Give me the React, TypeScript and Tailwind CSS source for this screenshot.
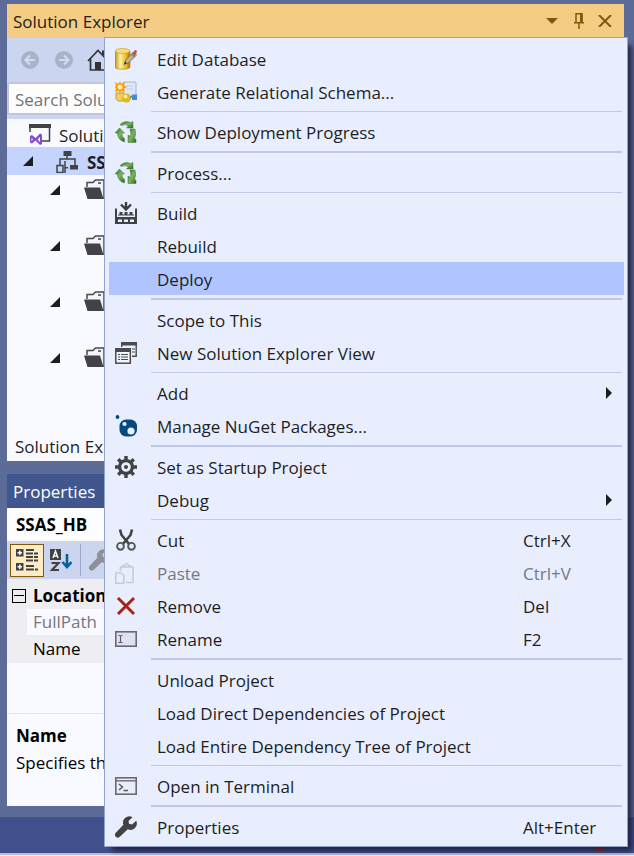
import React from "react";

type IconProps = { children: React.ReactNode; size?: string };

function Svg({ children, size = "size-[22px]" }: IconProps) {
  return (
    <svg viewBox="0 0 22 22" className={`${size} shrink-0`} fill="none" aria-hidden="true">
      {children}
    </svg>
  );
}

function EditDatabaseIcon() {
  return (
    <Svg>
      <defs>
        <linearGradient id="gold" x1="0" x2="1" y1="0" y2="0">
          <stop offset="0" stopColor="#c8910f" />
          <stop offset="0.35" stopColor="#fdf0a0" />
          <stop offset="0.75" stopColor="#e9b825" />
          <stop offset="1" stopColor="#a8730a" />
        </linearGradient>
      </defs>
      <path d="M0 3v16c0 3 15 3 15 0V3z" fill="url(#gold)" stroke="#a9791c" strokeWidth="0.6" />
      <ellipse cx="7.5" cy="3" rx="7.5" ry="2.6" fill="#f8dc6c" stroke="#c9992c" strokeWidth="0.6" />
      <path d="M9 16.500l2-5 7.500-7.500 3 3-7.500 7.500z" fill="#c3b287" stroke="#77653e" strokeWidth="0.8" />
      <path d="M9 16.500l1-3 2 2z" fill="#333" />
      <path d="M17 5.500l3-3.500q2-.5 2 2l-2.500 4z" fill="#bf5543" />
      <path d="M16 6l3.500 3" stroke="#7d8792" strokeWidth="1.500" />
    </Svg>
  );
}

function SchemaIcon() {
  return (
    <Svg>
      <rect x="8" y="1" width="13" height="14" rx="1" fill="#dce7f8" stroke="#a7b4d2" />
      <path d="M11 5h7M11 8h7" stroke="#c3cfe9" />
      <path d="M5 0l1.500 3L10 1 9 4.500 12 6 9 7.500 10 11 6.500 9.500 5 12 3.500 9.500 0 11 1 7.500 0 6 1 4 0 1l3.500 2z" fill="#f59b13" />
      <circle cx="5" cy="6" r="2.500" fill="#fff08a" />
      <path d="M1 12h8v8H3l-2-2z" fill="#f0cf5b" stroke="#c89d26" />
      <circle cx="11.500" cy="17" r="4.500" fill="#dfba20" />
      <circle cx="10.500" cy="15.500" r="2" fill="#fbf09c" />
      <path d="M15 16h3" stroke="#4c82c4" strokeWidth="1.500" />
      <rect x="17" y="13.500" width="5" height="5.500" fill="#4c86d4" />
    </Svg>
  );
}

function ProcessIcon() {
  return (
    <Svg>
      <defs>
        <linearGradient id="leaf" x1="0" x2="1" y1="0" y2="1">
          <stop offset="0" stopColor="#2f6a2a" />
          <stop offset="0.5" stopColor="#79b85c" />
          <stop offset="1" stopColor="#2c6427" />
        </linearGradient>
      </defs>
      <g fill="url(#leaf)" stroke="#3c7436" strokeWidth="0.5">
        <path d="M5 3.500Q10-1 15.500 1.500L18 .5v6.500h-6.500l2-2Q10 2.500 6.500 4.500z" />
        <path d="M0 12l4.500-5 5 5H7q-.5 4 2.500 5.500V21Q2.500 19 2.500 12z" />
        <path d="M15.500 8h4.500q1.500 5-.5 9l1.500 1.500V21.500h-8V14l2.500 1.500q1-3-.5-7.500z" />
      </g>
    </Svg>
  );
}

function BuildIcon() {
  return (
    <Svg>
      <path d="M11 0v7M6 2.500l5 5 5-5" stroke="#3d3d40" strokeWidth="2.400" />
      <path d="M0 6.500h2v6h18v-6h2V22H0z" fill="#424245" />
      <path d="M2 6.500h1v7h16v-7h1v8.500H2z" fill="#e8eefe" />
      <path d="M4.500 10h3v3h-3zm5 0h3v3h-3zm5 0h3v3h-3z" fill="#424245" />
      <path d="M3 17.500h4v2.500H3zm6 0h4v2.500H9zm6 0h4v2.500h-4z" fill="#e8eefe" />
    </Svg>
  );
}

function NewViewIcon() {
  return (
    <Svg>
      <path d="M6.700 5V.8h14.500v13.500H17" stroke="#4b4b4e" strokeWidth="1.400" />
      <path d="M6 0h16v3.500H6z" fill="#4b4b4e" />
      <rect x="0.800" y="6.800" width="14.500" height="14.400" fill="#f3f5ff" stroke="#4b4b4e" strokeWidth="1.500" />
      <path d="M0 6h16v4H0z" fill="#4b4b4e" />
      <path d="M3 12.500h2m1 0h7M3 15h2m1 0h7M3 17.500h2m1 0h7M17 7h3m-3 3h3" stroke="#4b4b4e" strokeWidth="1.200" />
    </Svg>
  );
}

function NuGetIcon() {
  return (
    <Svg>
      <circle cx="2.500" cy="2" r="1.900" fill="#04497d" />
      <rect x="4.500" y="4.500" width="17.500" height="17" rx="6.500" fill="#04497d" />
      <circle cx="9.500" cy="9" r="2.100" fill="#e8eefe" />
      <circle cx="16" cy="16" r="3.600" fill="#e8eefe" />
    </Svg>
  );
}

function GearIcon() {
  return (
    <Svg>
      <circle cx="11" cy="11" r="6.400" stroke="#424245" strokeWidth="3.200" />
      <path
        d="M11 0v4M11 18v4M0 11h4M18 11h4M3.200 3.200l3 3M15.800 15.800l3 3M18.800 3.200l-3 3M6.200 15.800l-3 3"
        stroke="#424245"
        strokeWidth="3.400"
      />
      <circle cx="11" cy="11" r="2" fill="#424245" />
    </Svg>
  );
}

function CutIcon() {
  return (
    <Svg>
      <path d="M5 .5l1.500 5.500 8 9.500M17 .5l-1.500 5.500-8 9.500" stroke="#424245" strokeWidth="2.600" />
      <circle cx="5.500" cy="17.300" r="3.400" stroke="#55555a" strokeWidth="1.900" />
      <circle cx="16.500" cy="17.300" r="3.400" stroke="#55555a" strokeWidth="1.900" />
    </Svg>
  );
}

function PasteIcon() {
  return (
    <Svg>
      <g stroke="#c7cad8" strokeWidth="1.600">
        <path d="M5.500 9V5H18v15.500h-7" />
        <path d="M8 5V3.500h1.500Q11-.5 13.500 3.500H15V5" />
        <path d="M.8 11h5.500l2.500 2.500v7.700h-8z" />
      </g>
    </Svg>
  );
}

function RemoveIcon() {
  return (
    <Svg>
      <path d="M3 3l16 16M19 3L3 19" stroke="#a62511" strokeWidth="3" />
    </Svg>
  );
}

function RenameIcon() {
  return (
    <Svg>
      <rect x="0.800" y="3.800" width="20.400" height="14.400" fill="#dfe0f3" stroke="#6a6a6e" strokeWidth="1.600" />
      <path d="M3.500 7.500h1q1 0 1 1v5q0 1-1 1h-1M7.500 7.500h-1q-1 0-1 1v5q0 1 1 1h1" stroke="#5a5a5e" strokeWidth="1.100" />
    </Svg>
  );
}

function TerminalIcon() {
  return (
    <Svg>
      <rect x="0.800" y="2.800" width="20.400" height="16.400" fill="#ebecf9" stroke="#6a6a6e" strokeWidth="1.600" />
      <path d="M1 5.800h20" stroke="#6a6a6e" strokeWidth="1.400" />
      <path d="M4 9l3.500 3L4 15M8.500 15.500H13" stroke="#58585c" strokeWidth="1.500" />
    </Svg>
  );
}

function WrenchIcon({ color = "#424245" }: { color?: string }) {
  return (
    <Svg>
      <path
        d="M17.500 1.200A6.300 6.300 0 0 0 8.400 8.800L.8 16.800a2.800 2.800 0 0 0 4 4l8-7.600A6.300 6.300 0 0 0 21.200 4.800L17 8.500l-3-.8L13.500 5z"
        fill={color}
      />
    </Svg>
  );
}

type Item = {
  label: string;
  icon?: React.ReactNode;
  keys?: string;
  submenu?: boolean;
  disabled?: boolean;
  active?: boolean;
};

const groups: Item[][] = [
  [
    { label: "Edit Database", icon: <EditDatabaseIcon /> },
    { label: "Generate Relational Schema...", icon: <SchemaIcon /> },
  ],
  [{ label: "Show Deployment Progress", icon: <ProcessIcon /> }],
  [{ label: "Process...", icon: <ProcessIcon /> }],
  [
    { label: "Build", icon: <BuildIcon /> },
    { label: "Rebuild" },
    { label: "Deploy", active: true },
  ],
  [
    { label: "Scope to This" },
    { label: "New Solution Explorer View", icon: <NewViewIcon /> },
  ],
  [
    { label: "Add", submenu: true },
    { label: "Manage NuGet Packages...", icon: <NuGetIcon /> },
  ],
  [
    { label: "Set as Startup Project", icon: <GearIcon /> },
    { label: "Debug", submenu: true },
  ],
  [
    { label: "Cut", icon: <CutIcon />, keys: "Ctrl+X" },
    { label: "Paste", icon: <PasteIcon />, keys: "Ctrl+V", disabled: true },
    { label: "Remove", icon: <RemoveIcon />, keys: "Del" },
    { label: "Rename", icon: <RenameIcon />, keys: "F2" },
  ],
  [
    { label: "Unload Project" },
    { label: "Load Direct Dependencies of Project" },
    { label: "Load Entire Dependency Tree of Project" },
  ],
  [{ label: "Open in Terminal", icon: <TerminalIcon /> }],
  [{ label: "Properties", icon: <WrenchIcon />, keys: "Alt+Enter" }],
];

function MenuRow({ item }: { item: Item }) {
  return (
    <button
      type="button"
      role="menuitem"
      disabled={item.disabled}
      className={`flex h-[33px] w-full items-center pl-[6px] text-left ${
        item.active ? "bg-[#b0c5ff]" : ""
      } ${item.disabled ? "text-[#76787f]" : ""}`}
    >
      <span className="mr-5 w-[22px] shrink-0">{item.icon}</span>
      <span className="flex-1 pt-[2px] whitespace-nowrap">{item.label}</span>
      {item.keys && <span className="w-[101px] pt-[2px] whitespace-nowrap">{item.keys}</span>}
      {item.submenu && (
        <svg viewBox="0 0 6 12" className="mr-3 h-3 w-[6px]" aria-hidden="true">
          <path d="M0 0l6 6-6 6z" fill="#1e1e1e" />
        </svg>
      )}
    </button>
  );
}

function ContextMenu() {
  return (
    <div
      role="menu"
      className="absolute top-[37px] right-[6px] left-[104px] border border-[#93a3cb] bg-[#e8eefe] pt-1 pr-[3px] pb-[3px] pl-1 shadow-[6px_6px_5px_-2px_rgba(20,25,50,0.8)]"
    >
      {groups.map((group, i) => (
        <div key={group[0].label}>
          {i > 0 && (
            <div
              role="separator"
              className={`my-[3px] mr-[2px] ml-[42px] border-[#bec9e9] ${i % 2 ? "border-t" : "border-t-2"}`}
            />
          )}
          {group.map((item) => (
            <MenuRow key={item.label} item={item} />
          ))}
        </div>
      ))}
    </div>
  );
}

function Expander() {
  return (
    <svg viewBox="0 0 10 10" className="size-[10px] shrink-0" aria-hidden="true">
      <path d="M10 0v10H0z" fill="#1e1e1e" />
    </svg>
  );
}

function FolderIcon() {
  return (
    <Svg>
      <path d="M3 8V3.500h6L11.500 1H20v18H18" stroke="#4a4a4d" strokeWidth="1.500" fill="#f3f4fb" />
      <path d="M0 8.500h16l3.500 11.500H3.500z" fill="#424245" />
      <path d="M14 4h3" stroke="#424245" strokeWidth="1.500" />
    </Svg>
  );
}

function NavIcon({ back }: { back?: boolean }) {
  return (
    <svg viewBox="0 0 18 18" className="size-[18px]" fill="none" aria-hidden="true">
      <circle cx="9" cy="9" r="9" fill="#abb2c8" />
      <path
        d={back ? "M14 9H5M9 4.500L4.500 9 9 13.500" : "M4 9h9M9 4.500l4.500 4.500L9 13.500"}
        stroke="#d2daf2"
        strokeWidth="2.200"
      />
    </svg>
  );
}

function SolutionExplorer() {
  const folders = ["Data Sources", "Data Source Views", "Cubes", "Dimensions"];
  return (
    <section className="mr-[10px] ml-[7px] bg-[#f9faff]">
      <header className="flex h-[34px] items-center bg-[#f5cc84] px-[6px] text-[#1e1e1e]">
        <h2 className="flex-1 pt-[2px]">Solution Explorer</h2>
        <button type="button" aria-label="Window position" className="mr-4">
          <svg viewBox="0 0 12 6" className="h-[6px] w-3">
            <path d="M0 0h12L6 6z" fill="#80590d" />
          </svg>
        </button>
        <button type="button" aria-label="Auto hide" className="mr-[14px]">
          <svg viewBox="0 0 10 16" className="h-4 w-[10px]" fill="none">
            <path d="M2 9V.8h6V9M0 9.800h10M5 10v6" stroke="#80590d" strokeWidth="1.500" />
            <path d="M6 1h2.500v8H6z" fill="#80590d" />
          </svg>
        </button>
        <button type="button" aria-label="Close" className="mr-[6px]">
          <svg viewBox="0 0 14 12" className="h-3 w-[14px]" fill="none">
            <path d="M1 0l12 12M13 0L1 12" stroke="#80590d" strokeWidth="2" />
          </svg>
        </button>
      </header>

      <div className="flex h-[44px] items-center bg-[#ccd5f0] pl-[14px]">
        <button type="button" aria-label="Back" className="mr-4">
          <NavIcon back />
        </button>
        <button type="button" aria-label="Forward" className="mr-[14px]">
          <NavIcon />
        </button>
        <button type="button" aria-label="Home">
          <svg viewBox="0 0 22 22" className="size-[22px]" fill="none">
            <path d="M1 12L11 1.500 21 12M3.500 10v11h15V10" stroke="#333336" strokeWidth="1.700" />
            <path d="M16 6V1.500" stroke="#333336" strokeWidth="2" />
            <path d="M8 13h6v8H8z" fill="#333336" />
          </svg>
        </button>
      </div>
      <div className="border-b-4 border-[#ccd5f0]">
        <input
          aria-label="Search Solution Explorer"
          placeholder="Search Solution Explorer"
          className="block h-[33px] w-full border-2 border-[#c0c7dc] bg-[#fdfdfe] px-[6px] pt-[2px] placeholder:text-[#717377]"
        />
      </div>

      <div role="tree" aria-label="Solution" className="h-[314px]">
        <div role="treeitem" className="flex h-7 items-center pt-1 pl-[22px]">
          <Svg>
            <path d="M1 8V1h19.500v16H13" stroke="#424245" strokeWidth="1.500" />
            <path d="M0 0h22v4H0z" fill="#424245" />
            <path d="M1 12l2-1 3.500 3L11 9.500l2 1V20l-2 1-4.500-4.500-3.500 3-2-1z" fill="#8a4fc8" />
            <path d="M2.500 14v3l1.500-1.500zM11 13l-2.500 2.500L11 18z" fill="#f9faff" />
          </Svg>
          <span className="ml-2 pt-[2px]">Solution</span>
        </div>
        <div role="treeitem" aria-selected="true" className="flex h-7 items-center bg-[#c5d4fe] pl-4">
          <Expander />
          <span className="ml-[23px] pt-[2px]">
            <Svg>
              <path d="M11 3v5M11 8H4v6M11 8h8v6M9 10v12" stroke="#424245" strokeWidth="1.500" />
              <path d="M7.500 0h8v5h-8zM14 14h8v4.500h-8z" fill="#424245" />
              <path d="M1 14.500h6v7H1z" stroke="#424245" strokeWidth="1.500" fill="#c5d4fe" />
              <path d="M9 16h3v1.500H9z" fill="#424245" />
            </Svg>
          </span>
          <span className="ml-[9px] pt-[4px] font-bold">SSAS_HB</span>
        </div>
        {folders.map((name) => (
          <div key={name} role="treeitem" aria-label={name} className="flex h-14 items-start pt-1 pl-[43px]">
            <span className="mt-[6px] flex">
              <Expander />
            </span>
            <span className="ml-6 flex">
              <FolderIcon />
            </span>
          </div>
        ))}
      </div>
      <footer className="flex h-7 items-center pl-2">Solution Explorer</footer>
    </section>
  );
}

function PropertiesPanel() {
  return (
    <section className="mt-[13px] mr-[10px] ml-[7px] bg-[#f9faff] text-black">
      <header className="flex h-[34px] items-center bg-[#40568d] px-[6px] text-white">
        <h2 className="pt-[2px]">Properties</h2>
      </header>
      <div className="flex h-[33px] items-center bg-[#fdfdff] pl-[9px] font-bold">SSAS_HB</div>
      <div className="flex h-[38px] items-center bg-[#ccd5f0] pl-[3px]">
        <button
          type="button"
          aria-label="Categorized"
          className="flex h-[33px] w-[34px] items-center justify-center border border-[#80590d] bg-[#fdecc3]"
        >
          <Svg>
            <path d="M0 0h7.500v7.500H0zM0 14h7.500v7.500H0z" fill="#424245" />
            <path d="M3.800 1.500v4.500M1.500 3.800H6M3.800 15.500V20M1.500 17.800H6" stroke="#fff" strokeWidth="1.500" />
            <path d="M10 1h8M10 4.500h7m1 0h4M10 8h7m1 0h4M10 11.500h7m1 0h4M10 17h8M10 20.500h8m1 0h3" stroke="#424245" strokeWidth="2.200" />
          </Svg>
        </button>
        <button type="button" aria-label="Alphabetical" className="ml-[6px]">
          <svg viewBox="0 0 22 22" className="size-[22px]" fill="none">
            <path d="M0 0h11v11H0z" fill="#424245" />
            <path d="M3 9l2.500-7L8 9M3.500 7h4" stroke="#fff" strokeWidth="1.400" />
            <path d="M1.500 14h7l-6.500 7h7" stroke="#424245" strokeWidth="2.200" />
            <path d="M17 5v13M12.500 13l4.500 5 4.500-5" stroke="#04619e" strokeWidth="2.600" />
          </svg>
        </button>
        <span className="mx-2 h-8 w-px bg-[#9ba7cb]" />
        <button type="button" aria-label="Property pages">
          <WrenchIcon color="#8e9097" />
        </button>
      </div>
      <div className="bg-[#eeedf2] pt-[3px]">
        <div className="flex h-[27px] items-center pl-[5px]">
          <span className="flex size-[14px] items-center border border-black px-px">
            <span className="h-px w-full bg-black" />
          </span>
          <span className="ml-[7px] font-bold">Location</span>
        </div>
        <div className="ml-[20px] flex h-[26px] items-center bg-[#f9faff] pl-[6px] text-[#76777c]">
          FullPath
        </div>
        <div className="flex h-7 items-center pl-[26px]">Name</div>
      </div>
      <div className="h-[50px]" />
      <div className="h-[93px] border-t border-[#e6e7ee] pt-2 pl-[9px]">
        <div className="flex h-[27px] items-center font-bold">Name</div>
        <p className="flex h-[27px] items-center whitespace-nowrap">Specifies the name.</p>
      </div>
    </section>
  );
}

export default function App() {
  return (
    <main className="relative flex min-h-screen flex-col overflow-hidden bg-[#5d6b99] pt-1 font-['Open_Sans','Noto_Sans',sans-serif] text-[17px] leading-6 text-[#1e1e1e]">
      <SolutionExplorer />
      <PropertiesPanel />
      <footer className="mt-[11px] flex h-9 items-end justify-end bg-[#40508d] pr-[27px] pb-[2px]">
        <span className="size-4 rounded-full bg-[#c81e12]" />
      </footer>
      <div className="h-[3px] border-t-2 border-[#b5bdd2] bg-[#eef0f5]" />
      <ContextMenu />
    </main>
  );
}
